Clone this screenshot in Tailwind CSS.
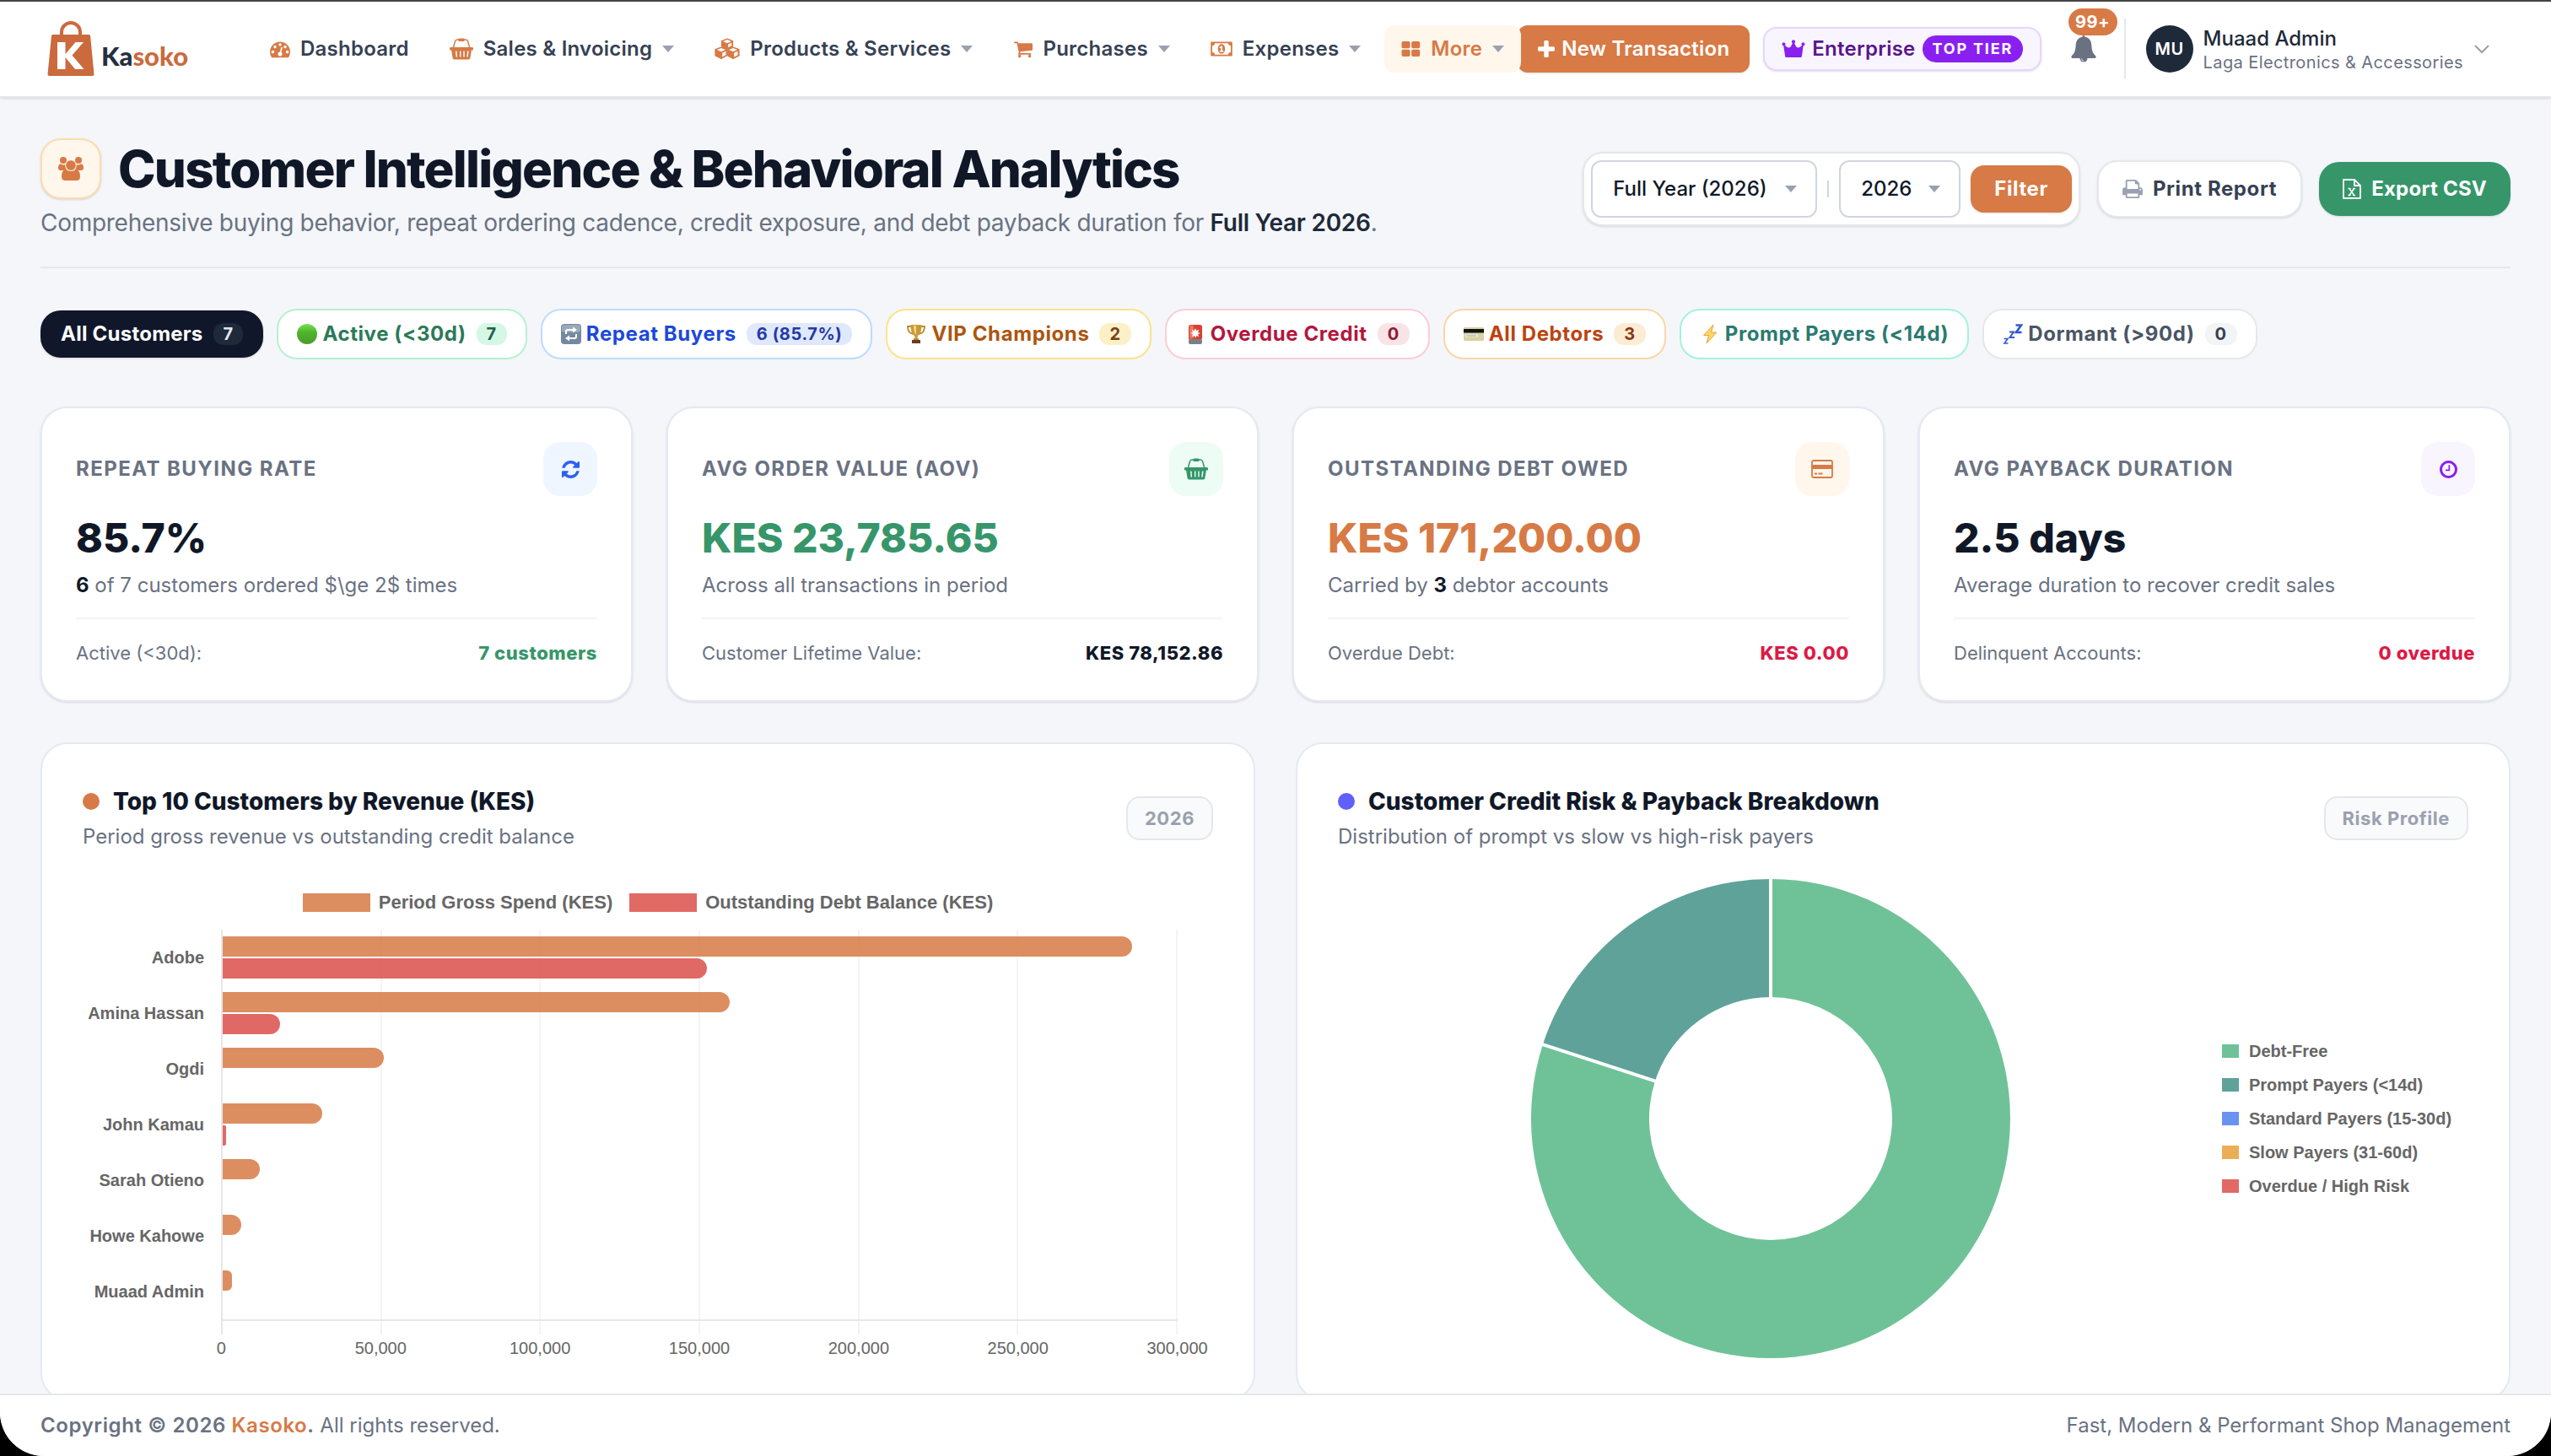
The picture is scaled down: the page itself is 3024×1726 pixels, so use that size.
<!DOCTYPE html>
<html lang="en">
<head>
<meta charset="utf-8">
<meta name="viewport" content="width=device-width, initial-scale=1">
<title>Kasoko – Customer Intelligence</title>
<script src="https://cdn.jsdelivr.net/npm/@tailwindcss/browser@4"></script>
</head>
<body class="bg-black font-[Inter,sans-serif] text-[24px] leading-8 text-gray-500">
<svg class="hidden" aria-hidden="true">
  <symbol id="caret" viewBox="0 0 14 8"><path d="M0 0h14L7 8z"/></symbol>
  <symbol id="gauge" viewBox="0 0 1792 1792"><path d="M384 1152q0-53-37.5-90.5t-90.5-37.5-90.5 37.5-37.5 90.5 37.5 90.5 90.5 37.5 90.5-37.5 37.5-90.5zm192-448q0-53-37.5-90.5t-90.5-37.5-90.5 37.5-37.5 90.5 37.5 90.5 90.5 37.5 90.5-37.5 37.5-90.5zm428 481l101-382q6-26-7.5-48.5t-38.5-29.5-48 6.5-30 39.5l-101 382q-60 5-107 43.5t-63 98.5q-20 77 20 146t117 89 146-20 89-117q16-60-6-117t-72-91zm660-33q0-53-37.5-90.5t-90.5-37.5-90.5 37.5-37.5 90.5 37.5 90.5 90.5 37.5 90.5-37.5 37.5-90.5zm-640-640q0-53-37.5-90.5t-90.5-37.5-90.5 37.5-37.5 90.5 37.5 90.5 90.5 37.5 90.5-37.5 37.5-90.5zm448 192q0-53-37.5-90.5t-90.5-37.5-90.5 37.5-37.5 90.5 37.5 90.5 90.5 37.5 90.5-37.5 37.5-90.5zm320 448q0 261-141 483-19 29-54 29h-1402q-35 0-54-29-141-221-141-483 0-182 71-348t191-286 286-191 348-71 348 71 286 191 191 286 71 348z"/></symbol>
  <symbol id="basket" viewBox="0 0 28 26"><path fill-rule="evenodd" d="M1.500 11h25a1.500 1.500 0 0 1 0 3.600h-.6l-1.500 9.200a2 2 0 0 1-2 1.700H5.600a2 2 0 0 1-2-1.700L2.100 14.600h-.6a1.500 1.500 0 0 1 0-3.600zM7 15.500l.6 7h1.500l-.6-7zM12 15.500v7h1.400v-7zM16.300 15.500v7h1.400v-7zM21 15.500l-.7 7h1.500l.7-7z"/><path d="M4.500 11 6.500 4q.6-2 2.600-2h10q2 0 2.500 2l2 7" fill="none" stroke="currentColor" stroke-width="1.500"/><rect x="10.500" y="0.500" width="7" height="3.600" rx="1.200"/></symbol>
  <symbol id="cubes" viewBox="0 0 30 26"><g stroke="currentColor" stroke-width="1.300" stroke-linejoin="round"><path d="m15 1 6.500 2.700v6L15 13 8.500 9.700v-6zM8 11l6.300 2.700v7.300L8 24.500 1 21v-7.300zM22 11l7 2.700V21l-7 3.500-6.300-3.500v-7.300z"/></g><path fill="#fff" d="m15 2 5 2-5 2.300L10 4zM8 12l5 2-5 2.300L2.800 14zM22 12l5 2-5 2.300-5-2.300zM16.200 7.500 20.300 5.700V9l-4.100 2.300zM9.200 17.700l4.200-1.900v4.400l-4.200 2.300zM23.200 17.700l4.300-1.900v4.400l-4.300 2.300z"/></symbol>
  <symbol id="cart" viewBox="0 0 1728 1792"><path d="M704 1536q0 52-38 90t-90 38-90-38-38-90 38-90 90-38 90 38 38 90zm896 0q0 52-38 90t-90 38-90-38-38-90 38-90 90-38 90 38 38 90zm128-1088v512q0 24-16.500 42.500t-40.500 21.500l-1044 122q13 60 13 70 0 16-24 64h920q26 0 45 19t19 45-19 45-45 19h-1024q-26 0-45-19t-19-45q0-11 8-31.500t16-36 21.500-40 15.500-29.500l-177-823h-204q-26 0-45-19t-19-45 19-45 45-19h256q16 0 28.500 6.500t19.500 15.500 13 24.500 8 26 5.500 29.500 4.500 26h1201q26 0 45 19t19 45z"/></symbol>
  <symbol id="money" viewBox="0 0 26 18"><path fill-rule="evenodd" d="M1 .5h24a.8.800 0 0 1 .8.800v15.400a.8.800 0 0 1-.8.800H1a.8.800 0 0 1-.8-.8V1.300A.8.800 0 0 1 1 .5zM5 2.200q0 2.800-3 2.800v8q3 0 3 2.800h16q0-2.800 3-2.800V5q-3 0-3-2.800z"/><path fill-rule="evenodd" d="M13 3.300c2.600 0 4.200 2.500 4.200 5.700s-1.600 5.700-4.200 5.700S8.800 12.200 8.800 9 10.400 3.300 13 3.300zm-.6 2.200-2 1.700.9 1 1-.7v3.600h-1.500v1.300h4.600v-1.300H14V5.500z"/></symbol>
  <symbol id="tiles" viewBox="0 0 24 20"><rect x=".5" y=".5" width="10.500" height="8.700" rx="2"/><rect x="12.700" y=".5" width="10.500" height="8.700" rx="2"/><rect x=".5" y="10.700" width="10.500" height="8.700" rx="2"/><rect x="12.700" y="10.700" width="10.500" height="8.700" rx="2"/></symbol>
  <symbol id="plus" viewBox="192 128 1408 1408"><path d="M1600 736v192q0 40-28 68t-68 28h-416v416q0 40-28 68t-68 28h-192q-40 0-68-28t-28-68v-416h-416q-40 0-68-28t-28-68v-192q0-40 28-68t68-28h416v-416q0-40 28-68t68-28h192q40 0 68 28t28 68v416h416q40 0 68 28t28 68z"/></symbol>
  <symbol id="crown" viewBox="0 0 28 22"><path d="M5.500 21a1.500 1.500 0 0 1-1.400-1.200L2.300 7.200a1.900 1.900 0 1 1 1.500-.5q3 3 5 2.800 2.400-.6 4-5.600a2 2 0 1 1 2.400 0q1.600 5 4 5.600 2 .2 5-2.800a1.900 1.900 0 1 1 1.500.5l-1.800 12.600a1.500 1.500 0 0 1-1.400 1.200z"/></symbol>
  <symbol id="bell" viewBox="0 0 30 32"><path d="M15 0q1.500 0 1.600 1.700C22 2.500 24 7 24.300 11c.3 6 1.200 10 4.700 13 1.200 1.200.7 3-1 3H2c-1.700 0-2.200-1.800-1-3 3.500-3 4.400-7 4.700-13C6 7 8 2.500 13.400 1.700 13.500 0 15 0 15 0z"/><path d="M10.500 27h9a4.500 4.500 0 0 1-9 0z"/><path d="M12.500 27.500a2.600 2.600 0 0 0 2.500 2.700" fill="none" stroke="#fff" stroke-width=".8"/></symbol>
  <symbol id="group" viewBox="0 0 30 28"><circle cx="6" cy="4" r="4"/><circle cx="24" cy="4" r="4"/><path d="M3 8.200q3 2 6 .8Q8 13 10.500 16H3q-3 0-3-3 0-4.500 3-4.800zM27 8.200q-3 2-6 .8 1 4-1.500 7H27q3 0 3-3 0-4.500-3-4.800z"/><circle cx="15" cy="10" r="6.300" stroke="#fff6ec" stroke-width="1"/><path d="M9 15q6 4 12 0c3.500 0 5 4 5 8.500 0 3-2 4.500-4 4.500H8c-2 0-4-1.500-4-4.500C4 19 5.500 15 9 15z"/></symbol>
  <symbol id="refresh" viewBox="128 128 1536 1536"><path d="M1639 1056q0 5-1 7-64 268-268 434.500t-478 166.500q-146 0-282.500-55t-243.500-157l-129 129q-19 19-45 19t-45-19-19-45v-448q0-26 19-45t45-19h448q26 0 45 19t19 45-19 45l-137 137q71 66 161 102t187 36q134 0 250-65t186-179q11-17 53-117 8-23 30-23h192q13 0 22.500 9.500t9.500 22.500zm25-800v448q0 26-19 45t-45 19h-448q-26 0-45-19t-19-45 19-45l138-138q-148-137-349-137-134 0-250 65t-186 179q-11 17-53 117-8 23-30 23h-199q-13 0-22.500-9.500t-9.500-22.500v-7q65-268 270-434.500t480-166.500q146 0 284 55.500t245 156.500l130-129q19-19 45-19t45 19 19 45z"/></symbol>
  <symbol id="card" viewBox="0 0 26 22"><rect x="1" y="1" width="24" height="20" rx="2" fill="none" stroke="currentColor" stroke-width="1.800"/><path d="M1 6h24v5H1zM4 15.500h3v2H4zM8.500 15.500h5v2h-5z"/></symbol>
  <symbol id="clock" viewBox="128 128 1536 1536"><path d="M1024 544v448q0 14-9 23t-23 9h-320q-14 0-23-9t-9-23v-64q0-14 9-23t23-9h224v-352q0-14 9-23t23-9h64q14 0 23 9t9 23zm416 352q0-148-73-273t-198-198-273-73-273 73-198 198-73 273 73 273 198 198 273 73 273-73 198-198 73-273zm224 0q0 209-103 385.500t-279.500 279.500-385.500 103-385.500-103-279.500-279.500-103-385.500 103-385.500 279.500-279.500 385.500-103 385.500 103 279.500 279.500 103 385.500z"/></symbol>
  <symbol id="print" viewBox="64 128 1664 1536"><path fill-rule="evenodd" d="M448 1536h896v-256h-896v256zm0-640h896v-384h-160q-40 0-68-28t-28-68v-160h-640v640zm1152 64q0-26-19-45t-45-19-45 19-19 45 19 45 45 19 45-19 19-45zm128 0v416q0 13-9.500 22.500t-22.500 9.500h-224v160q0 40-28 68t-68 28h-960q-40 0-68-28t-28-68v-160h-224q-13 0-22.500-9.500t-9.500-22.500v-416q0-79 56.500-135.500t135.500-56.500h64v-544q0-40 28-68t68-28h672q40 0 88 20t76 48l152 152q28 28 48 76t20 88v256h64q79 0 135.500 56.500t56.500 135.500z"/></symbol>
  <symbol id="sheet" viewBox="0 0 22 24"><path d="M1 1h13l7 7v15H1zM14 1v7h7" fill="none" stroke="currentColor" stroke-width="1.800" stroke-linejoin="round"/><path d="M6.500 11.500h3M12 11.500h3M6.500 19.500h3M12 19.500h3M8 11.500l5.500 8M13.500 11.500l-5.500 8" fill="none" stroke="currentColor" stroke-width="1.500"/></symbol>
</svg>

<div class="flex h-screen flex-col overflow-hidden rounded-b-[52px] bg-[#f4f6fa]">
  <header class="relative z-10 flex h-[116px] shrink-0 items-center border-t-2 border-b-2 border-t-[#444] border-b-gray-200 bg-white pr-[72px] pl-14 shadow-sm">
    <a href="#" class="flex w-[244px] items-center gap-2" aria-label="Kasoko">
      <svg class="h-[66px] w-14 shrink-0" viewBox="0 0 56 66"><path d="M17 17v-4a11 11 0 0 1 22 0v4" fill="none" stroke="#ca6a3d" stroke-width="4"/><path d="M6.500 16h43q1.500 0 1.600 1.500L55.500 63q0 2-2 2h-51q-2 0-2-2L5 17.500Q5 16 6.500 16z" fill="#ca6a3d"/><path d="M12 25h9.500v14l12-14H43L29.500 40.500 43.500 57H33L21.500 43v14H12z" fill="#fff"/></svg>
      <span class="mt-4 font-[Lato,sans-serif] text-[31px] font-black text-[#24303f]">Ka<span class="text-[#ca6a3d]">soko</span></span>
    </a>
    <nav class="flex items-center gap-2 font-semibold tracking-[0.01em] text-gray-700" aria-label="Main">
      <a href="#" class="flex h-14 items-center gap-3 px-5"><svg class="size-6 fill-[#d77a45]"><use href="#gauge"/></svg>Dashboard</a>
      <a href="#" class="flex h-14 items-center gap-3 px-5"><svg class="h-[26px] w-7 fill-[#d77a45] text-[#d77a45]"><use href="#basket"/></svg>Sales &amp; Invoicing<svg class="h-2 w-3.5 fill-gray-400"><use href="#caret"/></svg></a>
      <a href="#" class="flex h-14 items-center gap-3 px-5"><svg class="h-[26px] w-[30px] fill-[#d77a45] text-[#d77a45]"><use href="#cubes"/></svg>Products &amp; Services<svg class="h-2 w-3.5 fill-gray-400"><use href="#caret"/></svg></a>
      <a href="#" class="flex h-14 items-center gap-3 px-5"><svg class="h-6 w-[23px] fill-[#d77a45]"><use href="#cart"/></svg>Purchases<svg class="h-2 w-3.5 fill-gray-400"><use href="#caret"/></svg></a>
      <a href="#" class="flex h-14 items-center gap-3 px-5"><svg class="h-[18px] w-[26px] fill-[#d77a45]"><use href="#money"/></svg>Expenses<svg class="h-2 w-3.5 fill-gray-400"><use href="#caret"/></svg></a>
      <a href="#" class="relative flex h-14 items-center gap-3 rounded-xl bg-[#fff6ec] px-5 text-[#d77a45]"><svg class="h-5 w-[23px] fill-[#d77a45]"><use href="#tiles"/></svg>More<svg class="h-2 w-3.5 fill-gray-400"><use href="#caret"/></svg></a>
    </nav>
    <button class="-ml-1 flex h-14 items-center gap-2 rounded-xl bg-[#d77a45] px-6 font-semibold tracking-[0.01em] text-white shadow-sm"><svg class="size-5 fill-white"><use href="#plus"/></svg>New Transaction</button>
    <div class="ml-4 flex h-[52px] items-center gap-2 rounded-2xl border-2 border-purple-200 bg-[#f9f5ff] px-5 font-semibold tracking-[0.01em] text-[#59168b] shadow-sm"><svg class="h-[22px] w-7 fill-[#8a20f0]"><use href="#crown"/></svg>Enterprise<span class="rounded-full bg-[#8a20f0] px-3 text-[18px] font-bold tracking-widest text-white">TOP TIER</span></div>
    <button class="relative ml-auto flex size-16 items-center justify-center" aria-label="Notifications"><svg class="h-8 w-[30px] fill-gray-500"><use href="#bell"/></svg><span class="absolute -top-4 left-3.5 flex h-8 w-[58px] items-center justify-center rounded-full bg-[#d77a45] text-[20px] font-bold tracking-wide text-white">99+</span></button>
    <button class="ml-4 flex h-[72px] items-center gap-3 border-l-2 border-gray-200 pl-6 text-left">
      <span class="flex size-14 items-center justify-center rounded-full bg-gray-800 text-[20px] font-semibold tracking-wide text-white">MU</span>
      <span class="flex flex-col pt-1"><span class="leading-7 font-medium text-gray-800">Muaad Admin</span><span class="text-[20px] leading-7 tracking-[0.02em]">Laga Electronics &amp; Accessories</span></span>
      <svg class="h-3 w-5 fill-none stroke-gray-400 stroke-2" viewBox="0 0 20 12"><path d="m2 2 8 8 8-8"/></svg>
    </button>
  </header>

  <main class="min-h-0 flex-1 overflow-hidden px-12 pt-12">
    <div class="flex items-center justify-between border-b-2 border-gray-200 pb-8">
      <div>
        <h1 class="flex items-center gap-5 text-[60px] leading-[72px] font-extrabold tracking-[-0.03em] text-gray-900"><span class="flex size-[72px] items-center justify-center rounded-3xl border-2 border-[#fcdcb0] bg-[#fff6ec] shadow-sm"><svg class="h-7 w-[30px] fill-[#d77a45]"><use href="#group"/></svg></span>Customer Intelligence &amp; Behavioral Analytics</h1>
        <p class="mt-2 text-[28px] leading-10 tracking-[-0.01em]">Comprehensive buying behavior, repeat ordering cadence, credit exposure, and debt payback duration for <strong class="font-semibold text-gray-800">Full Year 2026</strong>.</p>
      </div>
      <form class="flex items-center gap-5 font-bold tracking-wide">
        <div class="flex h-[88px] items-center gap-3 rounded-3xl border-2 border-gray-200 bg-white px-2 text-gray-900 shadow-sm">
          <div class="relative font-medium tracking-normal"><select aria-label="Period" class="h-[68px] w-[268px] appearance-none rounded-xl border-2 border-gray-300 bg-white pl-6"><option>Full Year (2026)</option></select><svg class="pointer-events-none absolute top-[30px] right-6 h-2 w-3.5 fill-gray-400"><use href="#caret"/></svg></div>
          <span class="h-5 w-0.5 bg-gray-300"></span>
          <div class="relative font-medium tracking-normal"><select aria-label="Year" class="h-[68px] w-[144px] appearance-none rounded-xl border-2 border-gray-300 bg-white pl-6"><option>2026</option></select><svg class="pointer-events-none absolute top-[30px] right-6 h-2 w-3.5 fill-gray-400"><use href="#caret"/></svg></div>
          <button type="button" class="h-14 rounded-2xl bg-[#d77a45] px-7 text-white shadow-sm">Filter</button>
        </div>
        <button type="button" class="flex h-[68px] items-center gap-3 rounded-3xl border-2 border-gray-200 bg-white px-7 text-gray-700 shadow-sm"><svg class="h-[22px] w-6 fill-gray-400"><use href="#print"/></svg>Print Report</button>
        <button type="button" class="flex h-16 items-center gap-3 rounded-3xl bg-[#36966a] px-7 tracking-[0.01em] text-white shadow-sm"><svg class="h-6 w-[22px]"><use href="#sheet"/></svg>Export CSV</button>
      </form>
    </div>

    <div class="mt-12 flex items-center gap-4 font-bold tracking-wide">
      <button class="flex h-14 items-center gap-3 rounded-3xl bg-[#10172a] px-6 tracking-[0.01em] text-white shadow-sm">All Customers <span class="rounded-xl bg-[#1e293b] px-3 text-[20px] leading-[26px] text-gray-200">7</span></button>
      <button class="flex h-[60px] items-center gap-3 rounded-3xl border-2 border-[#b4f1cf] bg-white px-[22px] text-[#2b7a57]"><span class="flex items-center gap-1.5"><svg class="size-6" viewBox="0 0 24 24"><defs><linearGradient id="gr" x2="0" y2="1"><stop stop-color="#7be052"/><stop offset=".4" stop-color="#4fb52b"/><stop offset="1" stop-color="#4a9c2e"/></linearGradient></defs><circle cx="12" cy="12" r="12" fill="url(#gr)"/></svg>Active (&lt;30d)</span><span class="rounded-xl bg-[#d5f7e5] px-3 text-[20px] leading-[26px] text-[#23604a]">7</span></button>
      <button class="flex h-[60px] items-center gap-3 rounded-3xl border-2 border-blue-200 bg-white px-[22px] text-[#1d48da]"><span class="flex items-center gap-1.5"><svg class="size-6" viewBox="0 0 24 24"><rect width="24" height="24" rx="4" fill="#74899f"/><rect x="1" y="1" width="22" height="9" rx="3" fill="#98a9ba"/><path d="M6 12V9q0-2 2-2h8M18 12v3q0 2-2 2H8" fill="none" stroke="#fff" stroke-width="2"/><path d="m14 3.500 5 3.500-5 3.500zM10 13.500 5 17l5 3.500z" fill="#fff"/></svg>Repeat Buyers</span><span class="rounded-xl bg-[#dfe9fb] px-3 text-[20px] leading-[26px] text-[#2439a8]">6 (85.7%)</span></button>
      <button class="flex h-[60px] items-center gap-3 rounded-3xl border-2 border-[#fbe38a] bg-white px-[22px] text-[#ac560e]"><span class="flex items-center gap-1.5"><svg class="size-6" viewBox="0 0 24 24"><path d="M6 3H2q0 8 7 9M18 3h4q0 8-7 9" fill="none" stroke="#b98a2c" stroke-width="1.800"/><path d="M5.500 1h13q0 11-4.500 13l-1 4h-2l-1-4Q5.500 12 5.500 1z" fill="#c89a3a"/><path d="M9 2h3v11q-3-3-3-11z" fill="#f2d67b"/><path d="M7 19h10v4H7z" fill="#6b3b20"/><path d="M9 17h6v2H9z" fill="#b98a2c"/></svg>VIP Champions</span><span class="rounded-xl bg-[#fbf0c6] px-3 text-[20px] leading-[26px] text-[#7d3f12]">2</span></button>
      <button class="flex h-[60px] items-center gap-3 rounded-3xl border-2 border-[#fbcdd5] bg-white px-[22px] text-[#b4163d]"><span class="flex items-center gap-1.5"><svg class="size-6" viewBox="0 0 24 24"><rect x="4" y="1" width="16" height="18" rx="2.500" fill="#d9402f"/><rect x="5" y="1.500" width="5" height="16" rx="2" fill="#ef7361"/><path d="m12 5 1.300 3 3-1.300L15 10l3 1-3 1.300 1.300 3-3-1.300-1.300 3-1-3-3 1.300L9 12l-3-1 3-1-1.300-3.300 3 1.300z" fill="#fff"/><rect x="4" y="18" width="16" height="6" rx="2" fill="#7b8087"/></svg>Overdue Credit</span><span class="rounded-xl bg-[#fae3e6] px-3 text-[20px] leading-[26px] text-[#8b1a3a]">0</span></button>
      <button class="flex h-[60px] items-center gap-3 rounded-3xl border-2 border-[#fbd5a5] bg-white px-[22px] text-[#bd4310]"><span class="flex items-center gap-1.5"><svg class="size-6" viewBox="0 0 24 24"><rect y="4" width="24" height="16" rx="1.500" fill="#d9d2a0"/><path d="M0 6h24v4.500H0z" fill="#111"/><path d="M2 12.500h15v3H2z" fill="#f4f2e2"/><path d="M3 14h12" stroke="#8fa3c4"/></svg>All Debtors</span><span class="rounded-xl bg-[#fcecd3] px-3 text-[20px] leading-[26px] text-[#8b3417]">3</span></button>
      <button class="flex h-[60px] items-center gap-3 rounded-3xl border-2 border-[#a4f2dd] bg-white px-[22px] text-[#2b7a70]"><span class="flex items-center gap-1.5"><svg class="size-6" viewBox="0 0 24 24"><path d="M16 1 4.500 13.500h6L8 23l12-13h-6.500z" fill="#fbd768" stroke="#efa03c"/></svg>Prompt Payers (&lt;14d)</span></button>
      <button class="flex h-[60px] items-center gap-3 rounded-3xl border-2 border-gray-200 bg-white px-[22px] text-gray-600"><span class="flex items-center gap-1.5"><svg class="size-6 fill-none stroke-[#2f5ad0]" viewBox="0 0 24 24"><path stroke-width="2.600" d="M15.500 1.500H22L16 10h6.500"/><path stroke-width="2" d="M8 9.500h5L8.500 16H14"/><path stroke-width="1.600" d="M1.500 17.500H6L2 23h4.500"/></svg>Dormant (&gt;90d)</span><span class="rounded-xl bg-gray-100 px-3 text-[20px] leading-[26px] text-gray-700">0</span></button>
    </div>

    <section class="mt-14 grid grid-cols-4 gap-10" aria-label="Key figures">
      <article class="rounded-4xl border-2 border-[#e5e9f1] bg-white p-10 shadow-sm">
        <div class="flex h-16 items-center justify-between"><h2 class="font-bold tracking-[0.06em]">REPEAT BUYING RATE</h2><span class="flex size-16 items-center justify-center rounded-[20px] bg-blue-50"><svg class="size-[21px] fill-[#2a60f5]"><use href="#refresh"/></svg></span></div>
        <p class="mt-5 text-[48px] leading-[60px] font-extrabold text-gray-900">85.7%</p>
        <p class="mt-2 leading-9"><strong class="text-gray-900">6</strong> of 7 customers ordered $\ge 2$ times</p>
        <p class="mt-5 flex justify-between border-t-2 border-gray-100 pt-6 text-[22px] leading-8"><span>Active (&lt;30d):</span><strong class="font-extrabold tracking-wide text-[#36966a]">7 customers</strong></p>
      </article>
      <article class="rounded-4xl border-2 border-[#e5e9f1] bg-white p-10 shadow-sm">
        <div class="flex h-16 items-center justify-between"><h2 class="font-bold tracking-[0.06em]">AVG ORDER VALUE (AOV)</h2><span class="flex size-16 items-center justify-center rounded-[20px] bg-[#edfcf4]"><svg class="h-[26px] w-7 fill-[#36966a] text-[#36966a]"><use href="#basket"/></svg></span></div>
        <p class="mt-5 text-[48px] leading-[60px] font-extrabold text-[#36966a]">KES 23,785.65</p>
        <p class="mt-2 leading-9">Across all transactions in period</p>
        <p class="mt-5 flex justify-between border-t-2 border-gray-100 pt-6 text-[22px] leading-8"><span>Customer Lifetime Value:</span><strong class="font-extrabold tracking-wide text-gray-900">KES 78,152.86</strong></p>
      </article>
      <article class="rounded-4xl border-2 border-[#e5e9f1] bg-white p-10 shadow-sm">
        <div class="flex h-16 items-center justify-between"><h2 class="font-bold tracking-[0.06em]">OUTSTANDING DEBT OWED</h2><span class="flex size-16 items-center justify-center rounded-[20px] bg-[#fff6ec]"><svg class="h-[22px] w-[26px] fill-[#d77a45] text-[#d77a45]"><use href="#card"/></svg></span></div>
        <p class="mt-5 text-[48px] leading-[60px] font-extrabold text-[#d77a45]">KES 171,200.00</p>
        <p class="mt-2 leading-9">Carried by <strong class="text-gray-900">3</strong> debtor accounts</p>
        <p class="mt-5 flex justify-between border-t-2 border-gray-100 pt-6 text-[22px] leading-8"><span>Overdue Debt:</span><strong class="font-extrabold tracking-wide text-[#dc1a45]">KES 0.00</strong></p>
      </article>
      <article class="rounded-4xl border-2 border-[#e5e9f1] bg-white p-10 shadow-sm">
        <div class="flex h-16 items-center justify-between"><h2 class="font-bold tracking-[0.06em]">AVG PAYBACK DURATION</h2><span class="flex size-16 items-center justify-center rounded-[20px] bg-[#f9f5ff]"><svg class="size-[21px] fill-[#8a20f0]"><use href="#clock"/></svg></span></div>
        <p class="mt-5 text-[48px] leading-[60px] font-extrabold text-gray-900">2.5 days</p>
        <p class="mt-2 leading-9">Average duration to recover credit sales</p>
        <p class="mt-5 flex justify-between border-t-2 border-gray-100 pt-6 text-[22px] leading-8"><span>Delinquent Accounts:</span><strong class="font-extrabold tracking-wide text-[#dc1a45]">0 overdue</strong></p>
      </article>
    </section>

    <section class="mt-12 grid grid-cols-2 gap-12" aria-label="Charts">
      <article class="rounded-4xl border-2 border-[#e5e9f1] bg-white p-12">
        <div class="flex items-center justify-between">
          <div><h2 class="flex items-center gap-4 text-[28px] leading-10 font-extrabold text-gray-900"><span class="size-5 rounded-full bg-[#d77a45]"></span>Top 10 Customers by Revenue (KES)</h2><p class="mt-1 leading-9">Period gross revenue vs outstanding credit balance</p></div>
          <span class="rounded-2xl border-2 border-gray-200 bg-gray-50 px-5 py-2 text-[22px] font-bold tracking-wide text-gray-400">2026</span>
        </div>
        <div class="mt-12 font-['Liberation_Sans',sans-serif] text-[20px] leading-6 font-bold text-[#666]">
          <div class="flex justify-center gap-5 text-[22px]"><span class="flex items-center gap-2.5"><i class="h-[22px] w-20 bg-[#dc8e60]"></i>Period Gross Spend (KES)</span><span class="flex items-center gap-2.5"><i class="h-[22px] w-20 bg-[#e16a65]"></i>Outstanding Debt Balance (KES)</span></div>
          <div class="mt-5 flex pr-[42px]">
            <div class="grid w-[164px] auto-rows-[66px] items-center pr-5 text-right whitespace-nowrap"><span>Adobe</span><span>Amina Hassan</span><span>Ogdi</span><span>John Kamau</span><span>Sarah Otieno</span><span>Howe Kahowe</span><span>Muaad Admin</span></div>
            <div class="relative flex-1">
              <div class="absolute inset-x-0 top-0 -bottom-4 grid grid-cols-6 border-l-2 border-gray-200"><i class="border-r-2 border-gray-100"></i><i class="border-r-2 border-gray-100"></i><i class="border-r-2 border-gray-100"></i><i class="border-r-2 border-gray-100"></i><i class="border-r-2 border-gray-100"></i><i class="border-r-2 border-gray-100"></i></div>
              <div class="relative grid auto-rows-[66px] border-b-2 border-gray-200 pl-0.5">
                <div class="flex flex-col gap-0.5 pt-2"><i class="h-6 rounded-r-xl bg-[#d77a45]/85" style="width:95.2%"></i><i class="h-6 rounded-r-xl bg-[#dc4f4a]/85" style="width:50.7%"></i></div>
                <div class="flex flex-col gap-0.5 pt-2"><i class="h-6 rounded-r-xl bg-[#d77a45]/85" style="width:53.1%"></i><i class="h-6 rounded-r-xl bg-[#dc4f4a]/85" style="width:6%"></i></div>
                <div class="flex flex-col gap-0.5 pt-2"><i class="h-6 rounded-r-xl bg-[#d77a45]/85" style="width:16.9%"></i></div>
                <div class="flex flex-col gap-0.5 pt-2"><i class="h-6 rounded-r-xl bg-[#d77a45]/85" style="width:10.4%"></i><i class="h-6 rounded-r-xs bg-[#dc4f4a]/85" style="width:.35%"></i></div>
                <div class="flex flex-col gap-0.5 pt-2"><i class="h-6 rounded-r-xl bg-[#d77a45]/85" style="width:3.9%"></i></div>
                <div class="flex flex-col gap-0.5 pt-2"><i class="h-6 rounded-r-xl bg-[#d77a45]/85" style="width:1.9%"></i></div>
                <div class="flex flex-col gap-0.5 pt-2"><i class="h-6 rounded-r-md bg-[#d77a45]/85" style="width:1%"></i></div>
              </div>
            </div>
          </div>
          <div class="mt-5 -mr-[52px] ml-[70px] grid grid-cols-7 text-center font-normal"><span>0</span><span>50,000</span><span>100,000</span><span>150,000</span><span>200,000</span><span>250,000</span><span>300,000</span></div>
        </div>
      </article>
      <article class="rounded-4xl border-2 border-[#e5e9f1] bg-white p-12">
        <div class="flex items-center justify-between">
          <div><h2 class="flex items-center gap-4 text-[28px] leading-10 font-extrabold text-gray-900"><span class="size-5 rounded-full bg-[#625ffa]"></span>Customer Credit Risk &amp; Payback Breakdown</h2><p class="mt-1 leading-9">Distribution of prompt vs slow vs high-risk payers</p></div>
          <span class="rounded-2xl border-2 border-gray-200 bg-gray-50 px-5 py-2 text-[22px] font-bold tracking-wide text-gray-400">Risk Profile</span>
        </div>
        <div class="mt-8 flex items-center font-['Liberation_Sans',sans-serif] text-[20px] font-bold text-[#666]">
          <div class="flex flex-1 justify-center pr-[22px]"><svg class="size-[568px]" viewBox="-284 -284 568 568" role="img" aria-label="Debt-free 80%, prompt payers 20%"><path d="M0-284A284 284 0 1 1-270.100-87.800L-137-44.500A144 144 0 1 0 0-144z" fill="#6fc297"/><path d="M-270.100-87.800A284 284 0 0 1 0-284V-144A144 144 0 0 0-137-44.500z" fill="#5fa299"/><path d="M0-285V-143M-271-88.100-136-44.200" stroke="#fff" stroke-width="4"/></svg></div>
          <ul class="flex w-[292px] flex-col gap-2">
            <li class="flex items-center gap-3"><i class="h-4 w-5 bg-[#6fc297]"></i>Debt-Free</li>
            <li class="flex items-center gap-3"><i class="h-4 w-5 bg-[#5fa299]"></i>Prompt Payers (&lt;14d)</li>
            <li class="flex items-center gap-3"><i class="h-4 w-5 bg-[#6993f0]"></i>Standard Payers (15-30d)</li>
            <li class="flex items-center gap-3"><i class="h-4 w-5 bg-[#ebae55]"></i>Slow Payers (31-60d)</li>
            <li class="flex items-center gap-3"><i class="h-4 w-5 bg-[#e16a65]"></i>Overdue / High Risk</li>
          </ul>
        </div>
      </article>
    </section>
  </main>

  <footer class="relative z-10 flex h-[74px] shrink-0 items-center justify-between border-t-2 border-gray-200 bg-white px-12">
    <p><strong class="font-semibold tracking-wide">Copyright © 2026 <a href="#" class="text-[#d77a45]">Kasoko</a>.</strong> All rights reserved.</p>
    <p>Fast, Modern &amp; Performant Shop Management</p>
  </footer>
</div>
</body>
</html>
